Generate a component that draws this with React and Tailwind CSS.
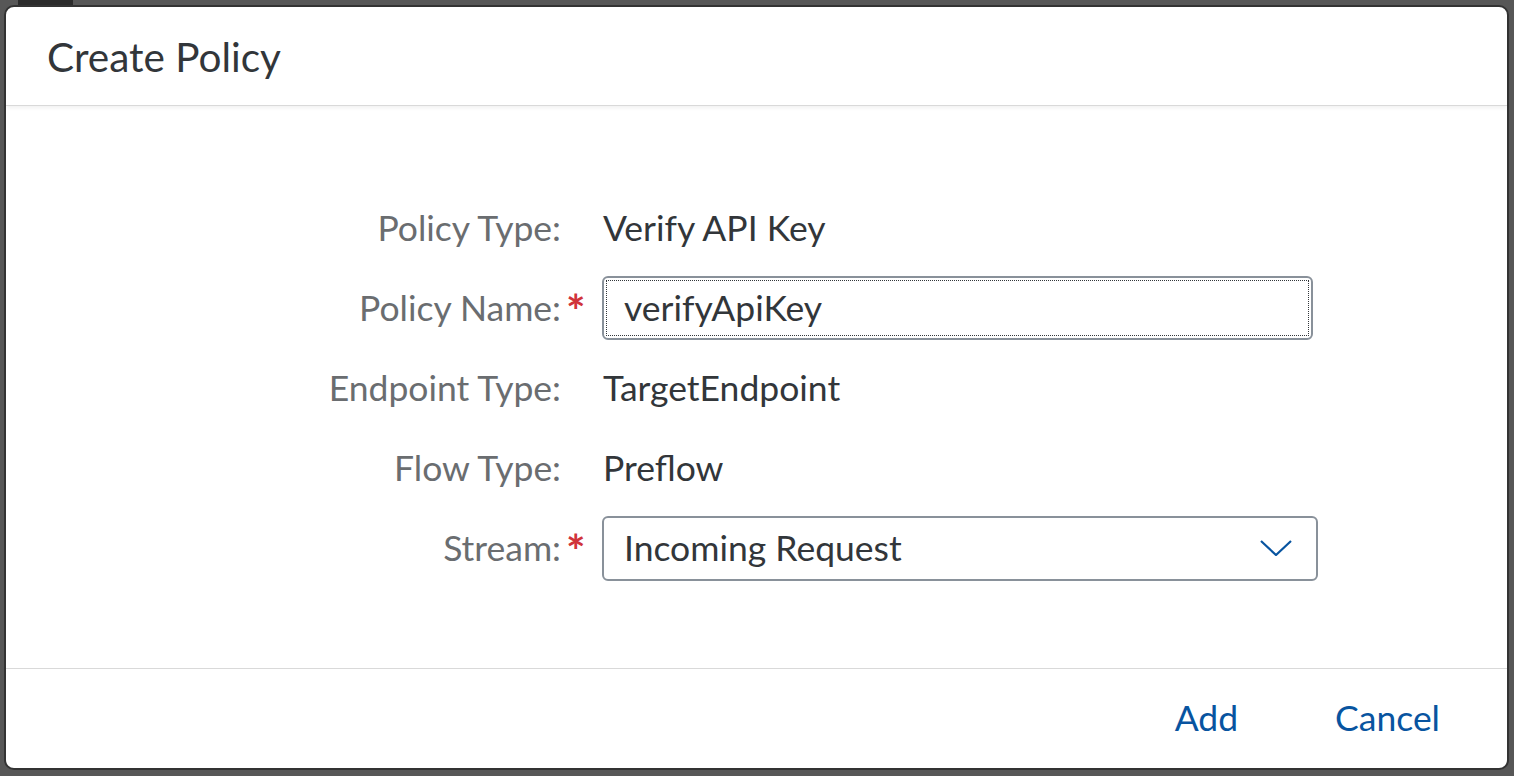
import React from "react";

const font = { fontFamily: "Lato, 'Liberation Sans', sans-serif" };

const Row = ({ label, required, children }) => (
    <div className="flex items-center h-[80px]">
        <div className="w-[555px] text-right text-[35.5px] text-[#6a6d70]">{label}</div>
        <div className="w-[41px] h-full flex items-center pl-[5px]">
            {required && <span className="text-[46px] leading-none font-bold text-[#d0333b] mt-[6px]">*</span>}
        </div>
        {children}
    </div>
);

const Value = ({ children }) => <div className="text-[35.5px] text-[#32363a] pl-[1px]">{children}</div>;

const App = () => {
    return (
        <div className="w-[1514px] h-[776px] bg-[#575757] flex flex-col overflow-hidden" style={font}>
            <div className="h-[5px] flex">
                <div className="ml-[18px] w-[55px] h-full bg-[#2b2b2b]" />
            </div>
            <div className="ml-[4px] w-[1505px] h-[765px] bg-white border-2 border-[#333333] rounded-[10px] flex flex-col">
                <div className="h-[99px] flex items-center pl-[41px] pt-[2px] border-b border-[#d9d9d9] shadow-[0_2px_4px_rgba(0,0,0,0.06)]">
                    <h1 className="text-[40.5px] text-[#32363a]">Create Policy</h1>
                </div>
                <div className="flex-1 flex flex-col pt-[82px]">
                    <Row label="Policy Type:">
                        <Value>Verify API Key</Value>
                    </Row>
                    <Row label="Policy Name:" required>
                        <div className="w-[711px] h-[64px] border-2 border-[#89919a] rounded-[6px] p-[2px]">
                            <div className="h-full border border-dotted border-[#32363a] flex items-center pl-[17px] text-[35.5px] text-[#32363a]">
                                verifyApiKey
                            </div>
                        </div>
                    </Row>
                    <Row label="Endpoint Type:">
                        <Value>TargetEndpoint</Value>
                    </Row>
                    <Row label="Flow Type:">
                        <Value>Preflow</Value>
                    </Row>
                    <Row label="Stream:" required>
                        <div className="w-[716px] h-[65px] border-2 border-[#89919a] rounded-[6px] flex items-center justify-between pl-[20px] pr-[24px] text-[35.5px] text-[#32363a]">
                            <span>Incoming Request</span>
                            <svg width="32" height="16" viewBox="0 0 32 16" fill="none">
                                <polyline points="1,1 16,15 31,1" stroke="#0854a0" strokeWidth="2.2" />
                            </svg>
                        </div>
                    </Row>
                </div>
                <div className="h-[100px] border-t border-[#d9d9d9] flex items-center justify-end gap-[97px] pr-[67px] pb-[2px]">
                    <button className="text-[35.5px] text-[#0854a0]">Add</button>
                    <button className="text-[35.5px] text-[#0854a0]">Cancel</button>
                </div>
            </div>
        </div>
    );
};

export default App;
